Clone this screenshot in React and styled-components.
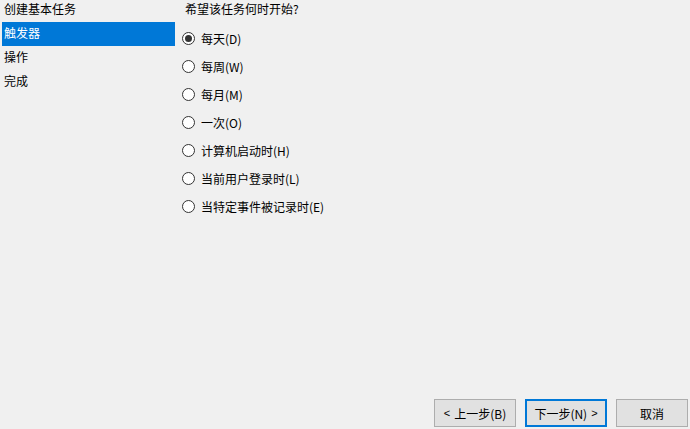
import React, { useState } from 'react'
import styled, { createGlobalStyle } from 'styled-components'

const GlobalStyle = createGlobalStyle`
  html, body {
    margin: 0;
    padding: 0;
    background: #f0f0f0;
  }
  body {
    font-family: "Microsoft YaHei", "Noto Sans CJK SC", sans-serif;
    font-size: 12px;
    color: #000;
  }
`

const Window = styled.div`
  width: 690px;
  height: 429px;
  display: flex;
  flex-direction: column;
  overflow: hidden;
`

const Body = styled.div`
  flex: 1;
  display: flex;
`

const Sidebar = styled.ul`
  list-style: none;
  margin: -2px 0 0 2px;
  padding: 0;
  width: 173px;
`

const Step = styled.li`
  height: 24px;
  line-height: 21px;
  padding-left: 2px;
  background: ${p => (p.$active ? '#0078d7' : 'transparent')};
  color: ${p => (p.$active ? '#fff' : '#000')};
  white-space: nowrap;
`

const Content = styled.div`
  padding: 0 0 0 7px;
  display: flex;
  flex-direction: column;
`

const Question = styled.div`
  margin: 0 0 0 3px;
  height: 20px;
  line-height: 18px;
`

const Options = styled.div`
  display: flex;
  flex-direction: column;
  margin-top: 4px;
`

const Option = styled.label`
  display: flex;
  align-items: center;
  height: 28px;
  gap: 6px;
  cursor: default;
`

const Circle = styled.span`
  width: 11px;
  height: 11px;
  border: 1px solid #333;
  border-radius: 50%;
  background: #fff;
  display: flex;
  align-items: center;
  justify-content: center;
  flex-shrink: 0;

  &::after {
    content: '';
    width: 7px;
    height: 7px;
    border-radius: 50%;
    background: ${p => (p.$checked ? '#333' : 'transparent')};
  }
`

const Footer = styled.div`
  display: flex;
  justify-content: flex-end;
  gap: 9px;
  padding: 0 2px 2px 0;
`

const Button = styled.button`
  font: inherit;
  color: #000;
  width: ${p => p.$w || 82}px;
  height: 28px;
  background: #e1e1e1;
  border: ${p => (p.$primary ? '2px solid #0078d7' : '1px solid #adadad')};
  padding: 0;
  display: flex;
  align-items: center;
  justify-content: center;
  gap: 4px;
`

const Arrow = styled.span`
  font-family: "Liberation Sans", sans-serif;
  font-size: 11px;
`

const steps = ['创建基本任务', '触发器', '操作', '完成']
const options = [
  '每天(D)',
  '每周(W)',
  '每月(M)',
  '一次(O)',
  '计算机启动时(H)',
  '当前用户登录时(L)',
  '当特定事件被记录时(E)',
]

const App = () => {
  const [selected, setSelected] = useState(0)
  return (
    <Window>
      <GlobalStyle />
      <Body>
        <Sidebar>
          {steps.map((s, i) => (
            <Step key={s} $active={i === 1}>{s}</Step>
          ))}
        </Sidebar>
        <Content>
          <Question>希望该任务何时开始?</Question>
          <Options>
            {options.map((o, i) => (
              <Option key={o} onClick={() => setSelected(i)}>
                <Circle $checked={selected === i} />
                {o}
              </Option>
            ))}
          </Options>
        </Content>
      </Body>
      <Footer>
        <Button><Arrow>&lt;</Arrow>上一步(B)</Button>
        <Button $primary>下一步(N)<Arrow>&gt;</Arrow></Button>
        <Button $w={72}>取消</Button>
      </Footer>
    </Window>
  )
}

export default App
